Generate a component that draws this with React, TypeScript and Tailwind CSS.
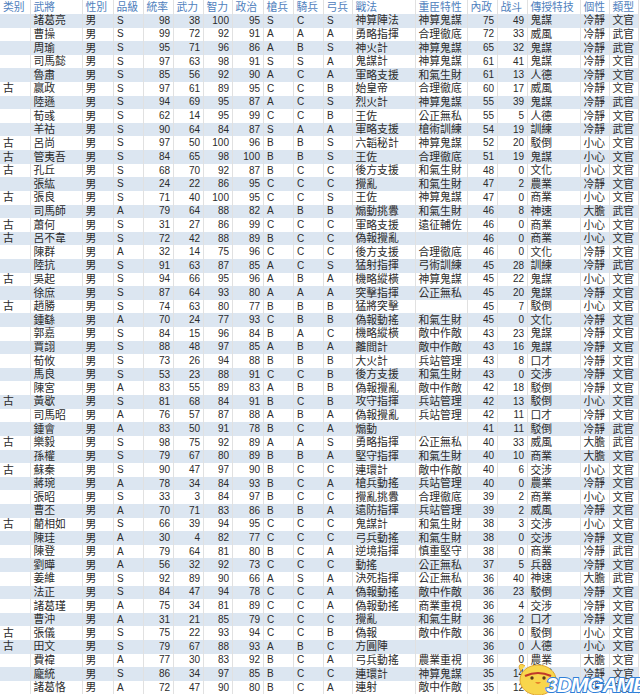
import React from "react";

type Row = [string, string, string, string, number, number, number, number, string, string, string, string, string, number, number, string, string, string];

const rows: Row[] = [
  ["", "諸葛亮", "男", "S", 98, 38, 100, 95, "S", "C", "S", "神算陣法", "神算鬼謀", 75, 49, "鬼謀", "冷靜", "文官"],
  ["", "曹操", "男", "S", 99, 72, 92, 91, "A", "A", "A", "勇略指揮", "合理徹底", 72, 33, "威風", "冷靜", "武官"],
  ["", "周瑜", "男", "S", 95, 71, 96, 86, "A", "B", "S", "神火計", "神算鬼謀", 65, 32, "鬼謀", "冷靜", "武官"],
  ["", "司馬懿", "男", "S", 97, 63, 98, 91, "S", "S", "A", "鬼謀計", "神算鬼謀", 61, 41, "鬼謀", "冷靜", "文官"],
  ["", "魯肅", "男", "S", 85, 56, 92, 90, "A", "C", "A", "軍略支援", "和氣生財", 61, 13, "人德", "冷靜", "文官"],
  ["古", "嬴政", "男", "S", 97, 61, 89, 95, "C", "C", "B", "始皇帝", "合理徹底", 60, 17, "威風", "冷靜", "文官"],
  ["", "陸遜", "男", "S", 94, 69, 95, 87, "A", "C", "S", "烈火計", "神算鬼謀", 55, 39, "鬼謀", "冷靜", "武官"],
  ["", "荀彧", "男", "S", 62, 14, 95, 99, "C", "C", "B", "王佐", "公正無私", 55, 5, "人德", "冷靜", "文官"],
  ["", "羊祜", "男", "S", 90, 64, 84, 87, "S", "A", "A", "軍略支援", "槍術訓練", 54, 19, "訓練", "冷靜", "武官"],
  ["古", "呂尚", "男", "S", 97, 50, 100, 96, "B", "B", "S", "六韜秘計", "神算鬼謀", 52, 20, "駁倒", "小心", "文官"],
  ["古", "管夷吾", "男", "S", 84, 65, 98, 100, "B", "B", "S", "王佐", "合理徹底", 51, 19, "鬼謀", "小心", "文官"],
  ["古", "孔丘", "男", "S", 68, 70, 92, 87, "B", "C", "C", "後方支援", "和氣生財", 48, 0, "文化", "小心", "文官"],
  ["", "張紘", "男", "S", 24, 22, 86, 95, "C", "C", "C", "攪亂", "和氣生財", 47, 2, "農業", "冷靜", "文官"],
  ["古", "張良", "男", "S", 71, 40, 100, 95, "C", "C", "S", "王佐", "神算鬼謀", 47, 0, "商業", "小心", "文官"],
  ["", "司馬師", "男", "A", 79, 64, 88, 82, "A", "B", "B", "煽動挑釁", "和氣生財", 46, 8, "神速", "大膽", "武官"],
  ["古", "蕭何", "男", "S", 31, 27, 86, 99, "C", "C", "C", "軍略支援", "遠征輔佐", 46, 0, "商業", "小心", "文官"],
  ["古", "呂不韋", "男", "S", 72, 42, 88, 89, "B", "C", "C", "偽報攪亂", "", 46, 0, "商業", "小心", "文官"],
  ["", "陳群", "男", "A", 32, 14, 75, 96, "C", "C", "C", "後方支援", "合理徹底", 46, 0, "文化", "冷靜", "文官"],
  ["", "陸抗", "男", "S", 91, 63, 87, 85, "A", "C", "S", "猛射指揮", "弓術訓練", 45, 28, "訓練", "冷靜", "武官"],
  ["古", "吳起", "男", "S", 94, 66, 95, 96, "A", "B", "A", "機略縱橫", "神算鬼謀", 45, 22, "鬼謀", "小心", "文官"],
  ["", "徐庶", "男", "S", 87, 64, 93, 80, "A", "A", "A", "突擊指揮", "公正無私", 45, 20, "鬼謀", "冷靜", "文官"],
  ["古", "趙勝", "男", "S", 74, 63, 80, 77, "B", "B", "B", "猛將突擊", "", 45, 7, "駁倒", "小心", "文官"],
  ["", "鍾繇", "男", "A", 70, 24, 77, 93, "C", "B", "B", "偽報動搖", "和氣生財", 45, 0, "文化", "冷靜", "文官"],
  ["", "郭嘉", "男", "S", 84, 15, 96, 84, "B", "A", "C", "機略縱橫", "敵中作敵", 43, 23, "鬼謀", "冷靜", "文官"],
  ["", "賈詡", "男", "S", 88, 48, 97, 85, "A", "B", "A", "離間計", "敵中作敵", 43, 16, "鬼謀", "冷靜", "文官"],
  ["", "荀攸", "男", "S", 73, 26, 94, 88, "B", "B", "B", "大火計", "兵站管理", 43, 8, "口才", "冷靜", "文官"],
  ["", "馬良", "男", "S", 53, 23, 88, 91, "C", "C", "B", "後方支援", "和氣生財", 43, 0, "交涉", "冷靜", "文官"],
  ["", "陳宮", "男", "A", 83, 55, 89, 83, "A", "B", "B", "偽報攪亂", "敵中作敵", 42, 18, "駁倒", "冷靜", "文官"],
  ["古", "黃歇", "男", "S", 81, 68, 84, 91, "B", "C", "B", "攻守指揮", "兵站管理", 42, 13, "駁倒", "小心", "文官"],
  ["", "司馬昭", "男", "A", 76, 57, 87, 88, "A", "B", "A", "偽報攪亂", "兵站管理", 42, 11, "口才", "冷靜", "文官"],
  ["", "鍾會", "男", "A", 83, 50, 91, 78, "B", "C", "A", "煽動", "", 41, 11, "駁倒", "冷靜", "武官"],
  ["古", "樂毅", "男", "S", 98, 75, 92, 89, "A", "A", "S", "勇略指揮", "公正無私", 40, 33, "威風", "大膽", "武官"],
  ["", "孫權", "男", "S", 79, 67, 80, 89, "B", "B", "A", "堅守指揮", "和氣生財", 40, 10, "商業", "大膽", "文官"],
  ["古", "蘇秦", "男", "S", 90, 47, 97, 90, "B", "C", "C", "連環計", "敵中作敵", 40, 6, "交涉", "小心", "文官"],
  ["", "蔣琬", "男", "A", 78, 34, 84, 93, "B", "C", "A", "槍兵動搖", "兵站管理", 40, 0, "農業", "冷靜", "文官"],
  ["", "張昭", "男", "S", 33, 3, 84, 97, "B", "C", "C", "攪亂挑釁", "合理徹底", 39, 2, "商業", "小心", "文官"],
  ["", "曹丕", "男", "A", 70, 71, 83, 86, "B", "B", "A", "遠防指揮", "兵站管理", 39, 2, "威風", "冷靜", "文官"],
  ["古", "藺相如", "男", "S", 66, 39, 94, 95, "C", "C", "C", "鬼謀計", "和氣生財", 38, 3, "交涉", "小心", "文官"],
  ["", "陳珪", "男", "A", 30, 4, 82, 77, "C", "C", "C", "弓兵動搖", "和氣生財", 38, 0, "交涉", "冷靜", "文官"],
  ["", "陳登", "男", "A", 79, 64, 81, 80, "B", "C", "A", "逆境指揮", "慎重堅守", 38, 0, "商業", "冷靜", "武官"],
  ["", "劉曄", "男", "A", 56, 32, 92, 73, "C", "C", "C", "動搖", "公正無私", 37, 5, "兵器", "冷靜", "文官"],
  ["", "姜維", "男", "S", 92, 89, 90, 66, "A", "S", "A", "決死指揮", "公正無私", 36, 40, "神速", "大膽", "武官"],
  ["", "法正", "男", "S", 84, 47, 94, 78, "C", "C", "A", "偽報動搖", "敵中作敵", 36, 23, "駁倒", "冷靜", "文官"],
  ["", "諸葛瑾", "男", "A", 75, 34, 81, 89, "C", "C", "A", "偽報動搖", "商業重視", 36, 4, "交涉", "冷靜", "文官"],
  ["", "曹沖", "男", "A", 31, 21, 85, 79, "C", "C", "C", "攪亂", "和氣生財", 36, 2, "口才", "冷靜", "文官"],
  ["古", "張儀", "男", "S", 75, 22, 93, 94, "C", "C", "B", "偽報", "敵中作敵", 36, 0, "駁倒", "小心", "文官"],
  ["古", "田文", "男", "S", 79, 67, 88, 93, "A", "B", "C", "方圓陣", "", 36, 0, "人德", "小心", "文官"],
  ["", "費禕", "男", "A", 77, 30, 83, 92, "B", "C", "A", "弓兵動搖", "農業重視", 36, 0, "農業", "大膽", "文官"],
  ["", "龐統", "男", "S", 86, 34, 97, 85, "B", "C", "C", "連環計", "神算鬼謀", 35, 14, "鬼謀", "冷靜", "文官"],
  ["", "諸葛恪", "男", "A", 72, 47, 90, 80, "B", "C", "A", "連射", "敵中作敵", 35, 12, "駁倒", "大膽", "文官"],
];

const headers = ["类别", "武將", "性別", "品級", "統率", "武力", "智力", "政治", "槍兵", "騎兵", "弓兵", "戰法", "重臣特性", "內政", "战斗", "傳授特技", "個性", "類型"];
const widths = [30, 52, 31, 30, 30, 30, 29, 31, 30, 30, 29, 63, 52, 30, 30, 53, 29, 29];
const numeric = [4, 5, 6, 7, 13, 14];
const latin = [3, 8, 9, 10];

function cellClass(ci: number) {
  if (numeric.includes(ci)) return "text-right pr-[2.5px] pl-0 py-0 text-[10px] whitespace-nowrap border-r border-[#e1e1e1]";
  if (latin.includes(ci)) return "text-left pl-[3.5px] pr-0 py-0 text-[10px] whitespace-nowrap border-r border-[#e1e1e1]";
  return "text-left pl-[3px] pr-0 py-0 whitespace-nowrap border-r border-[#e1e1e1]";
}

function Chick() {
  return (
    <svg width="46" height="38" viewBox="0 0 46 38">
      <path d="M5 13 C1 8 4 4 9 8" fill="#f8d64c" stroke="#e0a52a" strokeWidth="1" />
      <ellipse cx="22" cy="22" rx="18" ry="15" fill="#f8d64c" stroke="#e0a52a" strokeWidth="1" />
      <path d="M9 18 Q22 12 35 18" fill="none" stroke="#c0392b" strokeWidth="2.2" />
      <circle cx="16" cy="20" r="1.7" fill="#5a3a1a" />
      <circle cx="28" cy="20" r="1.7" fill="#5a3a1a" />
      <path d="M19 24 Q22 28 25 24 Z" fill="#e8832a" />
    </svg>
  );
}

export default function App() {
  return (
    <div className="relative w-[640px] h-[695px] overflow-hidden bg-white text-[#2b2b2b] font-['Liberation_Sans','Noto_Sans_CJK_TC',sans-serif] text-[10.8px] leading-none">
      <table className="table-fixed border-collapse w-[638px]">
        <colgroup>
          {widths.map((w, i) => (
            <col key={i} style={{ width: w }} />
          ))}
        </colgroup>
        <thead>
          <tr className="h-[14px] bg-white">
            {headers.map((h) => (
              <th key={h} className="text-left font-normal text-[#4f81bd] pl-[3px] pr-0 py-0 whitespace-nowrap border-r border-[#e1e1e1]">
                {h}
              </th>
            ))}
          </tr>
        </thead>
        <tbody>
          {rows.map((r, ri) => (
            <tr key={ri} className={ri % 2 === 0 ? "h-[13.62px] bg-[#dce6f1]" : "h-[13.62px] bg-white"}>
              {r.map((c, ci) => (
                <td key={ci} className={cellClass(ci)}>
                  {c}
                </td>
              ))}
            </tr>
          ))}
        </tbody>
      </table>
      <div className="absolute left-[516px] top-[658px]">
        <Chick />
      </div>
      <div className="absolute left-[546px] top-[674px] text-[21px] font-bold italic text-white tracking-tighter font-['Liberation_Sans',sans-serif] [-webkit-text-stroke:2px_#2f7fd8] [paint-order:stroke_fill]">
        3DMGAME
      </div>
    </div>
  );
}
